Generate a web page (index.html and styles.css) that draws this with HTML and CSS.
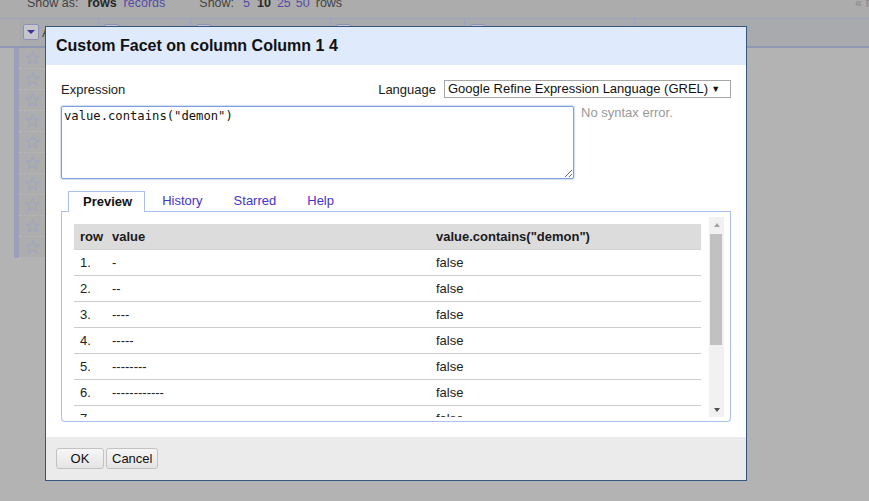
FILE: index.html
```html
<!DOCTYPE html>
<html>
<head>
<meta charset="utf-8">
<title>Custom Facet</title>
<link rel="stylesheet" href="styles.css">
</head>
<body>
<div class="page">
  <div class="topbar">
    <div class="viewbar">
      <span class="lbl">Show as:</span>
      <span class="cur sa-rows">rows</span>
      <span class="lnk sa-records">records</span>
      <span class="lbl sh-label">Show:</span>
      <span class="lnk sh-5">5</span>
      <span class="cur sh-10">10</span>
      <span class="lnk sh-25">25</span>
      <span class="lnk sh-50">50</span>
      <span class="lbl sh-rows">rows</span>
    </div>
    <div class="pager">« first</div>
  </div>
  <div class="colheads">
    <div class="ch-gut"></div>
    <div class="ch ch1"><span class="colbtn main"><span class="tri"></span></span><span class="all">All</span></div>
    <div class="ch ch2"><span class="colbtn"></span></div>
    <div class="ch ch3"><span class="colbtn"></span></div>
    <div class="ch ch4"><span class="colbtn"></span></div>
    <div class="ch ch5"><span class="colbtn"></span></div>
    <div class="ch ch6"></div>
  </div>
  <div class="grid">
    <div class="gut"></div>
    <div class="gutbar"></div>
    <div class="stars">
      <div class="star-row"><svg class="star" width="15" height="14" viewBox="0 0 15 14"><path d="M7.5 0.6 L9.15 5.04 L14.16 5.14 L10.16 8.17 L11.61 12.96 L7.5 10.1 L3.39 12.96 L4.84 8.17 L0.84 5.14 L5.85 5.04 Z"/></svg></div>
      <div class="star-row"><svg class="star" width="15" height="14" viewBox="0 0 15 14"><path d="M7.5 0.6 L9.15 5.04 L14.16 5.14 L10.16 8.17 L11.61 12.96 L7.5 10.1 L3.39 12.96 L4.84 8.17 L0.84 5.14 L5.85 5.04 Z"/></svg></div>
      <div class="star-row"><svg class="star" width="15" height="14" viewBox="0 0 15 14"><path d="M7.5 0.6 L9.15 5.04 L14.16 5.14 L10.16 8.17 L11.61 12.96 L7.5 10.1 L3.39 12.96 L4.84 8.17 L0.84 5.14 L5.85 5.04 Z"/></svg></div>
      <div class="star-row"><svg class="star" width="15" height="14" viewBox="0 0 15 14"><path d="M7.5 0.6 L9.15 5.04 L14.16 5.14 L10.16 8.17 L11.61 12.96 L7.5 10.1 L3.39 12.96 L4.84 8.17 L0.84 5.14 L5.85 5.04 Z"/></svg></div>
      <div class="star-row"><svg class="star" width="15" height="14" viewBox="0 0 15 14"><path d="M7.5 0.6 L9.15 5.04 L14.16 5.14 L10.16 8.17 L11.61 12.96 L7.5 10.1 L3.39 12.96 L4.84 8.17 L0.84 5.14 L5.85 5.04 Z"/></svg></div>
      <div class="star-row"><svg class="star" width="15" height="14" viewBox="0 0 15 14"><path d="M7.5 0.6 L9.15 5.04 L14.16 5.14 L10.16 8.17 L11.61 12.96 L7.5 10.1 L3.39 12.96 L4.84 8.17 L0.84 5.14 L5.85 5.04 Z"/></svg></div>
      <div class="star-row"><svg class="star" width="15" height="14" viewBox="0 0 15 14"><path d="M7.5 0.6 L9.15 5.04 L14.16 5.14 L10.16 8.17 L11.61 12.96 L7.5 10.1 L3.39 12.96 L4.84 8.17 L0.84 5.14 L5.85 5.04 Z"/></svg></div>
      <div class="star-row"><svg class="star" width="15" height="14" viewBox="0 0 15 14"><path d="M7.5 0.6 L9.15 5.04 L14.16 5.14 L10.16 8.17 L11.61 12.96 L7.5 10.1 L3.39 12.96 L4.84 8.17 L0.84 5.14 L5.85 5.04 Z"/></svg></div>
      <div class="star-row"><svg class="star" width="15" height="14" viewBox="0 0 15 14"><path d="M7.5 0.6 L9.15 5.04 L14.16 5.14 L10.16 8.17 L11.61 12.96 L7.5 10.1 L3.39 12.96 L4.84 8.17 L0.84 5.14 L5.85 5.04 Z"/></svg></div>
      <div class="star-row"><svg class="star" width="15" height="14" viewBox="0 0 15 14"><path d="M7.5 0.6 L9.15 5.04 L14.16 5.14 L10.16 8.17 L11.61 12.96 L7.5 10.1 L3.39 12.96 L4.84 8.17 L0.84 5.14 L5.85 5.04 Z"/></svg></div>
    </div>
  </div>
</div>

<div class="dialog">
  <div class="dlg-head">Custom Facet on column Column 1 4</div>
  <div class="dlg-body">
    <div class="expr-top">
      <span class="label">Expression</span>
      <div class="lang">
        <span class="label">Language</span>
        <div class="select"><span class="sel-text">Google Refine Expression Language (GREL)</span><span class="arrow">▼</span></div>
      </div>
    </div>
    <div class="expr-row">
      <textarea class="expr" spellcheck="false">value.contains("demon")</textarea>
      <div class="status">No syntax error.</div>
    </div>
    <div class="tabs">
      <div class="tab-sp"></div>
      <div class="tab active">Preview</div>
      <div class="tab">History</div>
      <div class="tab">Starred</div>
      <div class="tab">Help</div>
      <div class="tab-fill"></div>
    </div>
    <div class="panel">
      <div class="preview">
        <div class="table-wrap">
          <table class="ptable">
            <colgroup><col class="c-row"><col class="c-val"><col class="c-res"></colgroup>
            <thead>
              <tr><th>row</th><th>value</th><th>value.contains("demon")</th></tr>
            </thead>
            <tbody>
              <tr><td>1.</td><td>-</td><td>false</td></tr>
              <tr><td>2.</td><td>--</td><td>false</td></tr>
              <tr><td>3.</td><td>----</td><td>false</td></tr>
              <tr><td>4.</td><td>-----</td><td>false</td></tr>
              <tr><td>5.</td><td>--------</td><td>false</td></tr>
              <tr><td>6.</td><td>------------</td><td>false</td></tr>
              <tr><td>7.</td><td>-----------------</td><td>false</td></tr>
              <tr><td>8.</td><td>----------------------</td><td>false</td></tr>
              <tr><td>9.</td><td>-----------------------------</td><td>false</td></tr>
              <tr><td>10.</td><td>------------------------------------</td><td>false</td></tr>
            </tbody>
          </table>
        </div>
        <div class="vscroll">
          <div class="sb-up"><span class="tri-up"></span></div>
          <div class="sb-thumb"></div>
          <div class="sb-track"></div>
          <div class="sb-down"><span class="tri-down"></span></div>
        </div>
      </div>
    </div>
  </div>
  <div class="dlg-foot">
    <button class="btn btn-ok">OK</button>
    <button class="btn">Cancel</button>
  </div>
</div>
</body>
</html>
```

FILE: styles.css
```css
* { box-sizing: border-box; }
html, body { margin: 0; padding: 0; }
body {
  width: 869px;
  height: 501px;
  overflow: hidden;
  background: #b3b3b3;
  font-family: "Liberation Sans", Arial, sans-serif;
  font-size: 13px;
  color: #222;
  position: relative;
}

/* ---------- dimmed page behind the dialog ---------- */
.topbar {
  height: 18px;
  background: #acacac;
  display: flex;
  font-size: 12.5px;
  line-height: 7px;
  overflow: hidden;
  white-space: nowrap;
}
.viewbar {
  flex: 0 0 855px;
  padding-left: 27px;
  display: flex;
  color: #434343;
}
.viewbar .cur { font-weight: bold; color: #262626; }
.viewbar .lnk { color: #574aa6; }
.sa-rows { margin-left: 9px; }
.sa-records { margin-left: 7px; }
.sh-label { margin-left: 34px; }
.sh-5 { margin-left: 9px; }
.sh-10 { margin-left: 7px; }
.sh-25 { margin-left: 6px; }
.sh-50 { margin-left: 5px; }
.sh-rows { margin-left: 6px; }
.pager { color: #8a8a8a; }

.colheads {
  height: 30px;
  border-top: 1px solid #9ba3bd;
  border-bottom: 2px solid #8e98b5;
  background: #a9aaae;
  display: flex;
}
.ch-gut { width: 19px; background: #acacac; }
.ch {
  border-right: 1px solid #9ba3bd;
  display: flex;
  align-items: flex-start;
  padding: 4px 0 0 5px;
}
.ch1 { width: 80px; padding-left: 4px; }
.ch2 { width: 92px; }
.ch3 { width: 140px; }
.ch4 { width: 134px; }
.ch5 { width: 170px; }
.ch6 { flex: 1; border-right: 0; }
.colbtn {
  width: 15px;
  height: 15px;
  margin-top: 1px;
  border: 1px solid #8d92b4;
  border-radius: 2px;
  background: #c4c5cd;
}
.colbtn.main {
  width: 16px;
  height: 16px;
  display: flex;
  align-items: center;
  justify-content: center;
}
.tri {
  width: 0;
  height: 0;
  border-left: 4px solid transparent;
  border-right: 4px solid transparent;
  border-top: 4px solid #3d3391;
}
.all { margin: 3px 0 0 3px; color: #3d3d3d; line-height: 14px; }

.grid { display: flex; }
.gut { width: 14px; }
.gutbar { width: 5px; height: 210px; background: #9ba0b8; }
.stars { width: 26px; background: #adadad; }
.star-row {
  height: 21px;
  border-bottom: 1px dotted #b9b9b9;
  display: flex;
  align-items: center;
  justify-content: center;
}
.star { display: block; width: 15px; height: 14px; }
.star path { fill: none; stroke: #9ca3c4; stroke-width: 1; }

/* ---------- dialog ---------- */
.dialog {
  position: absolute;
  left: 45px;
  top: 26px;
  width: 702px;
  height: 455px;
  border: 1px solid #34577d;
  background: #fff;
  display: flex;
  flex-direction: column;
}
.dlg-head {
  height: 38px;
  flex: 0 0 38px;
  background: #dfeafc;
  padding-left: 10px;
  font-size: 16px;
  font-weight: bold;
  line-height: 38px;
  color: #111;
}
.dlg-body { flex: 1; padding: 15px; }

.expr-top {
  height: 18px;
  display: flex;
  justify-content: space-between;
  align-items: center;
}
.label { color: #222; }
.lang { display: flex; align-items: center; }
.lang .label { margin-right: 1px; }
.select {
  width: 287px;
  height: 18px;
  margin-left: 7px;
  border: 1px solid #a6a6a6;
  background: #fff;
  display: flex;
  align-items: center;
  padding: 0 0 0 3px;
  color: #111;
  line-height: 16px;
  white-space: nowrap;
  overflow: hidden;
}
.sel-text { flex: 0 0 auto; }
.arrow { font-size: 9px; color: #111; margin-left: auto; margin-right: 12px; padding-left: 3px; }

.expr-row { display: flex; margin-top: 8px; }
.expr {
  width: 513px;
  height: 73px;
  margin: 0;
  padding: 2px 2px;
  border: 1px solid #7d9fdb;
  border-radius: 2px;
  box-shadow: 0 0 1px 1px rgba(125, 160, 225, 0.35);
  font-family: "DejaVu Sans Mono", "Liberation Mono", monospace;
  font-size: 12.2px;
  line-height: 14px;
  color: #111;
  outline: none;
  resize: both;
}
.status {
  margin-left: 7px;
  color: #999;
  line-height: 13px;
}

.tabs { display: flex; height: 21px; margin-top: 12px; }
.tab-sp { width: 7px; border-bottom: 1px solid #aac2ef; }
.tab {
  height: 21px;
  line-height: 20px;
  padding: 0 14px 0 17px;
  border-bottom: 1px solid #aac2ef;
  color: #4433cc;
}
.tab.active {
  border: 1px solid #aac2ef;
  border-bottom: 0;
  background: #fff;
  padding: 0 12px 0 14px;
  font-weight: bold;
  color: #111;
}
.tab-fill { flex: 1; border-bottom: 1px solid #aac2ef; }

.panel {
  height: 210px;
  border: 1px solid #aac2ef;
  border-top: 0;
  border-radius: 0 0 4px 4px;
  padding: 5px 6px 4px;
}
.preview {
  height: 200px;
  display: flex;
}
.table-wrap {
  flex: 1;
  overflow: hidden;
  padding: 7px 8px 0 6px;
}
.ptable {
  width: 100%;
  table-layout: fixed;
  border-collapse: separate;
  border-spacing: 0;
}
.c-row { width: 32px; }
.c-val { width: 324px; }
.ptable th,
.ptable td {
  box-sizing: content-box;
  height: 25px;
  padding: 0 6px;
  text-align: left;
  vertical-align: middle;
  white-space: nowrap;
  overflow: hidden;
  border-bottom: 1px solid #cccccc;
}
.ptable th {
  background: #dcdcdc;
  border-bottom-color: #d4d4d4;
  font-weight: bold;
  color: #1a1a1a;
}
.ptable td { color: #222; }

.vscroll {
  width: 15px;
  flex: 0 0 15px;
  background: #f1f1f1;
  display: flex;
  flex-direction: column;
}
.sb-up, .sb-down {
  height: 16px;
  display: flex;
  align-items: center;
  justify-content: center;
}
.sb-down { height: 15px; }
.tri-up {
  width: 0; height: 0;
  border-left: 3.5px solid transparent;
  border-right: 3.5px solid transparent;
  border-bottom: 4px solid #a3a3a3;
}
.tri-down {
  width: 0; height: 0;
  border-left: 3.5px solid transparent;
  border-right: 3.5px solid transparent;
  border-top: 4px solid #505050;
}
.sb-thumb {
  width: 12px;
  height: 111px;
  margin: 1px 0 0 1px;
  background: #c1c1c1;
}
.sb-track { flex: 1; }

.dlg-foot {
  height: 43px;
  flex: 0 0 43px;
  background: #ebebeb;
  padding: 11px 10px 0;
  display: flex;
  align-items: flex-start;
  gap: 2px;
}
.btn {
  height: 21px;
  min-width: 48px;
  padding: 0 5px;
  border: 1px solid #c2c2c2;
  border-radius: 3px;
  background: linear-gradient(#f6f6f6, #e4e4e4);
  font-family: "Liberation Sans", Arial, sans-serif;
  font-size: 13px;
  color: #111;
  line-height: 19px;
}
```
